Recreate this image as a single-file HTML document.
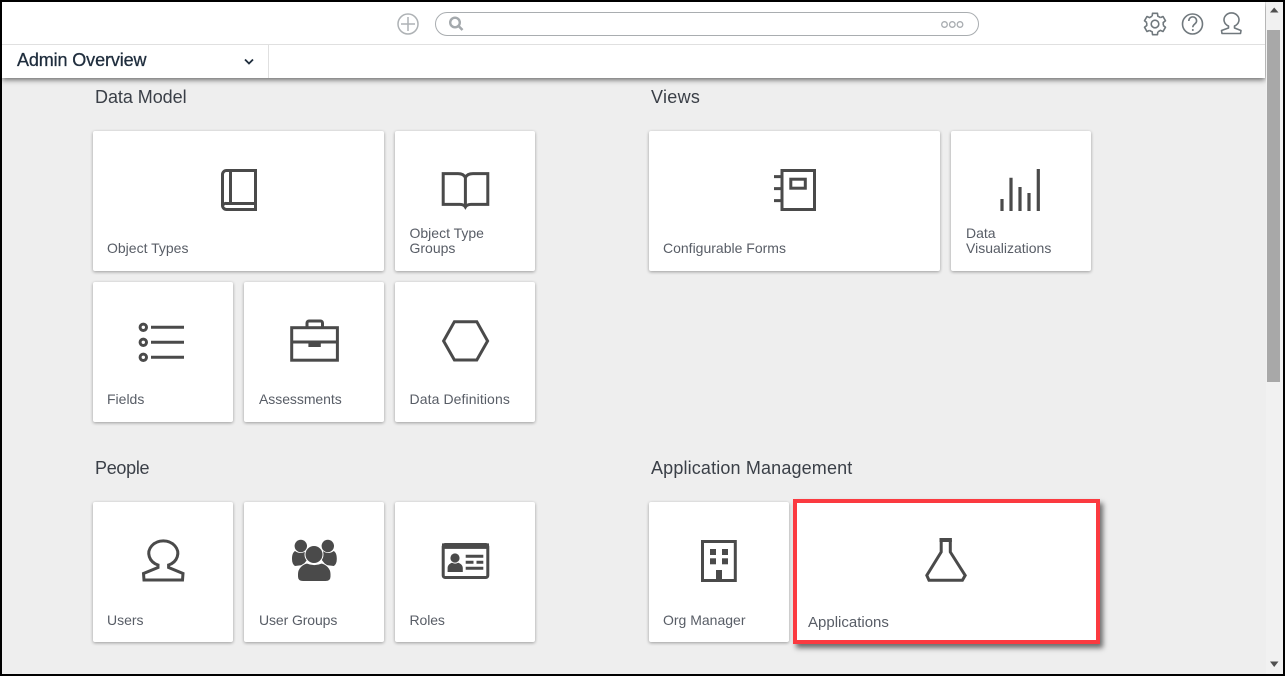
<!DOCTYPE html>
<html><head><meta charset="utf-8">
<style>
html,body{margin:0;padding:0;width:1285px;height:676px;overflow:hidden;background:#eee;}
body{position:relative;font-family:"Liberation Sans",sans-serif;}
.abs{position:absolute;}
.card{position:absolute;background:#fff;border-radius:2px;box-shadow:0 1px 3px rgba(0,0,0,.35);}
.lb{position:absolute;font-size:14px;line-height:15px;color:#585d66;white-space:nowrap;}
.h{position:absolute;font-size:18px;line-height:22px;color:#3a3f47;white-space:nowrap;}
svg{position:absolute;left:0;top:0;}
</style></head><body>
<div class="abs" style="left:2px;top:2px;width:1263px;height:76px;background:#fff;box-shadow:0 2px 5px rgba(0,0,0,.55);"></div>
<div class="abs" style="left:2px;top:44px;width:1263px;height:1px;background:#e0e0e0;"></div>
<div class="abs" style="left:268px;top:45px;width:1px;height:33px;background:#e0e0e0;"></div>
<div class="abs" style="left:435px;top:12px;width:542px;height:22px;border:1px solid #a9adb0;border-radius:12px;background:#fff;"></div>
<div class="abs" style="left:17px;top:49px;font-size:18px;line-height:22px;color:#1f2d3d;white-space:nowrap;letter-spacing:-.12px;-webkit-text-stroke:.3px #1f2d3d;">Admin Overview</div>

<div class="h" style="left:95px;top:86px;letter-spacing:-.05px;">Data Model</div>
<div class="h" style="left:651px;top:86px;letter-spacing:.3px;">Views</div>
<div class="h" style="left:95px;top:457px;letter-spacing:-.3px;">People</div>
<div class="h" style="left:651px;top:457px;letter-spacing:.15px;">Application Management</div>

<div class="card" style="left:93px;top:131px;width:291px;height:140px;"></div>
<div class="card" style="left:395px;top:131px;width:140px;height:140px;"></div>
<div class="card" style="left:93px;top:282px;width:140px;height:140px;"></div>
<div class="card" style="left:244px;top:282px;width:140px;height:140px;"></div>
<div class="card" style="left:395px;top:282px;width:140px;height:140px;"></div>
<div class="card" style="left:649px;top:131px;width:291px;height:140px;"></div>
<div class="card" style="left:951px;top:131px;width:140px;height:140px;"></div>
<div class="card" style="left:93px;top:502px;width:140px;height:140px;"></div>
<div class="card" style="left:244px;top:502px;width:140px;height:140px;"></div>
<div class="card" style="left:395px;top:502px;width:140px;height:140px;"></div>
<div class="card" style="left:649px;top:502px;width:140px;height:140px;"></div>
<div class="abs" style="left:793px;top:499px;width:301px;height:139px;background:#fff;border:3px solid #fb3a40;box-shadow:3px 4px 5px rgba(0,0,0,.55),inset 0 0 0 1px #fb3a40;"></div>

<div class="lb" style="left:107px;top:241px;">Object Types</div>
<div class="lb" style="left:409.500px;top:226px;">Object Type<br>Groups</div>
<div class="lb" style="left:107px;top:392px;">Fields</div>
<div class="lb" style="left:259px;top:392px;letter-spacing:-.05px;">Assessments</div>
<div class="lb" style="left:409.500px;top:392px;letter-spacing:.1px;">Data Definitions</div>
<div class="lb" style="left:663px;top:241px;">Configurable Forms</div>
<div class="lb" style="left:966px;top:226px;">Data<br>Visualizations</div>
<div class="lb" style="left:107px;top:613px;">Users</div>
<div class="lb" style="left:259px;top:613px;letter-spacing:-.1px;">User Groups</div>
<div class="lb" style="left:409.500px;top:613px;letter-spacing:-.1px;">Roles</div>
<div class="lb" style="left:663px;top:613px;">Org Manager</div>
<div class="lb" style="left:808px;top:615px;font-size:15px;">Applications</div>

<!-- scrollbar -->
<div class="abs" style="left:1266px;top:2px;width:17px;height:672px;background:#f1f1f1;"></div>
<div class="abs" style="left:1267px;top:30px;width:13px;height:352px;background:#a8a8a8;"></div>

<svg width="1285" height="676" viewBox="0 0 1285 676" fill="none">
<g stroke="#4a4a4a" stroke-width="3">
<!-- book -->
<path d="M255.500 170.500H226.500a4 4 0 0 0-4 4V205.500a4 4 0 0 0 4 4H255.500Z"/>
<path d="M230.500 170.500V203.500M255.500 203.500H226.500a3.500 3.500 0 0 0-4 2.500"/>
<!-- open book -->
<path d="M443.200 173.600H458Q463.500 173.600 465.400 177.500Q467.300 173.600 473 173.600H487.800V204.400H471Q467 204.400 465.400 207Q463.800 204.400 460 204.400H443.200Z"/>
<path d="M465.400 177V206"/>
<!-- fields -->
<circle cx="143.300" cy="327.300" r="3.200"/><circle cx="143.300" cy="342.300" r="3.200"/><circle cx="143.300" cy="357.300" r="3.200"/>
<path d="M151 327.300H184M151 342.300H184M151 357.300H184"/>
<!-- briefcase -->
<rect x="291.700" y="327.700" width="45.700" height="32.500"/>
<path d="M291.700 342H337.400M307 327V323a2 2 0 0 1 2-2H320.500a2 2 0 0 1 2 2V327"/>
<!-- hexagon -->
<path d="M443.600 341 454.400 321.700H476.800L487.600 341 476.800 360H454.400Z"/>
<!-- user -->
<path d="M158 565A14.500 12.500 0 1 1 168.600 565V567.500L183 573.500 182.500 580H144L143.500 573.500 158 567.500Z"/>
<!-- notebook -->
<rect x="782" y="170.500" width="32.500" height="39"/>
<rect x="790.800" y="179.200" width="14.500" height="9"/>
<path d="M774 176.600H781M774 188.600H781M774 200.600H781"/>
<!-- org -->
<rect x="702.500" y="541.500" width="32.800" height="39"/>
<!-- flask -->
<path d="M941.200 540V552L926.800 575.400 929 580.300H962.400L965.200 575.400 950.300 552V540"/>
</g>
<rect x="939.500" y="538" width="12.400" height="4" fill="#4a4a4a"/>
<!-- clasp -->
<rect x="308.400" y="341" width="12.400" height="6" fill="#4a4a4a"/>
<!-- bars -->
<path d="M1002 211V199M1011 211V177.700M1020 211V187M1029 211V193M1038.300 211V169" stroke="#4a4a4a" stroke-width="3.200"/>
<!-- org windows -->
<g fill="#4a4a4a">
<rect x="710" y="549" width="6" height="6"/><rect x="722" y="549" width="6" height="6"/>
<rect x="710" y="558.300" width="6" height="6"/><rect x="722" y="558.300" width="6" height="6"/>
<rect x="716" y="570" width="6" height="10"/>
</g>
<!-- user groups -->
<g fill="#4a4a4a">
<circle cx="300.800" cy="546" r="6.200"/><circle cx="327.800" cy="546" r="6.200"/>
<path d="M292 559c0-4 .8-6.500 3-8q5.500 4 11 0l5 4-8 10-8 1q-3-2-3-7Z"/>
<path d="M336.800 559c0-4-.8-6.500-3-8q-5.500 4-11 0l-5 4 8 10 8 1q3-2 3-7Z"/>
</g>
<g fill="#4a4a4a" stroke="#fff" stroke-width="1">
<circle cx="314" cy="554.500" r="9"/>
<path d="M297.500 574c0-6 5-10 9.500-11q7.300 3.200 14.500 0c4.500 1 9.500 5 9.500 11v2.500q0 5-5.500 5H303q-5.500 0-5.500-5Z"/>
</g>
<!-- roles -->
<rect x="443.200" y="544.500" width="44.600" height="33" rx="2" stroke="#4a4a4a" stroke-width="3"/>
<rect x="442" y="543.400" width="47" height="5.500" fill="#4a4a4a"/>
<circle cx="455" cy="558" r="4.600" fill="#4a4a4a"/>
<path d="M447.600 572v-4c0-3 3-5 4.500-5.200q3 1.600 6 0c1.500.2 4.700 2.200 4.700 5.200v4Z" fill="#4a4a4a"/>
<path d="M465.700 556.300H483.300M465.700 562.300H473.500M476.500 562.300H483.300M465.700 568.300H483.300" stroke="#4a4a4a" stroke-width="3"/>
<!-- chevron -->
<path d="M245 59.500 249 63.500 253 59.500" stroke="#1f2d3d" stroke-width="1.800"/>
<!-- plus -->
<g stroke="#aeb2b5" stroke-width="1.500">
<circle cx="408" cy="24" r="10"/><path d="M408 17V31M401 24H415"/>
</g>
<!-- search -->
<circle cx="455" cy="22.500" r="4.800" stroke="#a4a9ad" stroke-width="2.400"/>
<path d="M458.500 26 462.500 30" stroke="#a4a9ad" stroke-width="2.600"/>
<g stroke="#a9adb1" stroke-width="1.300">
<circle cx="944.500" cy="24.500" r="2.800"/><circle cx="952.300" cy="24.500" r="2.800"/><circle cx="960" cy="24.500" r="2.800"/>
</g>
<!-- gear -->
<g transform="translate(1155 24)" stroke="#70787d" stroke-width="1.600" stroke-linejoin="round">
<circle r="3.800"/>
<path transform="rotate(30)" d="M7.800-2.840L10.700-2.470L10.700 2.470L7.800 2.840A8.300 8.300 0 0 1 6.360 5.340"/>
<path transform="rotate(90)" d="M7.800-2.840L10.700-2.470L10.700 2.470L7.800 2.840A8.300 8.300 0 0 1 6.360 5.340"/>
<path transform="rotate(150)" d="M7.800-2.840L10.700-2.470L10.700 2.470L7.800 2.840A8.300 8.300 0 0 1 6.360 5.340"/>
<path transform="rotate(210)" d="M7.800-2.840L10.700-2.470L10.700 2.470L7.800 2.840A8.300 8.300 0 0 1 6.360 5.340"/>
<path transform="rotate(270)" d="M7.800-2.840L10.700-2.470L10.700 2.470L7.800 2.840A8.300 8.300 0 0 1 6.360 5.340"/>
<path transform="rotate(330)" d="M7.800-2.840L10.700-2.470L10.700 2.470L7.800 2.840A8.300 8.300 0 0 1 6.360 5.340"/>
</g>
<!-- help -->
<circle cx="1192.500" cy="24" r="10" stroke="#70787d" stroke-width="1.600"/>
<path d="M1188.800 21c0-5.500 7.800-5.500 7.800 0 0 3-3.800 3-3.800 6.200" stroke="#70787d" stroke-width="1.600"/>
<circle cx="1192.800" cy="30" r="1" fill="#70787d"/>
<!-- top user -->
<path d="M1228.500 26A7.500 6.800 0 1 1 1234.500 26V28L1241 30.500 1240.500 33.500H1222L1221.500 30.500 1228.500 28Z" stroke="#70787d" stroke-width="1.600" stroke-linejoin="round"/>
<!-- scroll arrows -->
<path d="M1270 12.500H1278.500L1274.200 7.500Z" fill="#505050"/>
<path d="M1270 661.500H1278.500L1274.200 667Z" fill="#505050"/>
</svg>

<!-- screenshot frame -->
<div class="abs" style="left:0;top:0;width:1285px;height:2px;background:#000;"></div>
<div class="abs" style="left:0;top:674px;width:1285px;height:2px;background:#000;"></div>
<div class="abs" style="left:0;top:0;width:2px;height:676px;background:#000;"></div>
<div class="abs" style="left:1283px;top:0;width:2px;height:676px;background:#000;"></div>
</body></html>
